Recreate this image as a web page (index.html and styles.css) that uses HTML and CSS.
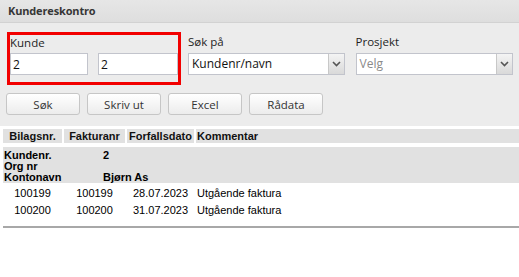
FILE: index.html
```html
<!DOCTYPE html>
<html lang="no">
<head>
<meta charset="utf-8">
<title>Kundereskontro</title>
<link rel="stylesheet" href="styles.css">
</head>
<body>
<div class="titlebar">Kundereskontro</div>
<div class="panel">
  <div class="filters">
    <div class="kunde-box">
      <div class="lbl">Kunde</div>
      <div class="pair">
        <input class="txt from" type="text" value="2">
        <input class="txt to" type="text" value="2">
      </div>
    </div>
    <div class="field sok">
      <div class="lbl">Søk på</div>
      <div class="select">
        <span class="val">Kundenr/navn</span>
        <span class="arrow"><svg width="9" height="6" viewBox="0 0 9 6"><path d="M1 1 L4.5 4.5 L8 1" fill="none" stroke="#555" stroke-width="1.6"/></svg></span>
      </div>
    </div>
    <div class="field prosjekt">
      <div class="lbl">Prosjekt</div>
      <div class="select">
        <span class="val placeholder">Velg</span>
        <span class="arrow"><svg width="9" height="6" viewBox="0 0 9 6"><path d="M1 1 L4.5 4.5 L8 1" fill="none" stroke="#555" stroke-width="1.6"/></svg></span>
      </div>
    </div>
  </div>
  <div class="buttons">
    <button class="btn">Søk</button>
    <button class="btn">Skriv ut</button>
    <button class="btn">Excel</button>
    <button class="btn">Rådata</button>
  </div>
</div>
<div class="report">
  <div class="cols thead">
    <div class="c">Bilagsnr.</div>
    <div class="c">Fakturanr</div>
    <div class="c">Forfallsdato</div>
    <div class="c left">Kommentar</div>
  </div>
  <div class="group">
    <div class="grow"><span class="gl">Kundenr.</span><span>2</span></div>
    <div class="grow"><span class="gl">Org nr</span><span></span></div>
    <div class="grow"><span class="gl">Kontonavn</span><span>Bjørn As</span></div>
  </div>
  <div class="rows">
    <div class="cols drow">
      <div class="c">100199</div>
      <div class="c">100199</div>
      <div class="c">28.07.2023</div>
      <div class="c left">Utgående faktura</div>
    </div>
    <div class="cols drow">
      <div class="c">100200</div>
      <div class="c">100200</div>
      <div class="c">31.07.2023</div>
      <div class="c left">Utgående faktura</div>
    </div>
  </div>
  <div class="rule"></div>
</div>
</body>
</html>
```
FILE: styles.css
```css
* { box-sizing: border-box; }
html, body { margin: 0; padding: 0; background: #fff; }
body { font-family: "Open Sans", "Noto Sans", sans-serif; color: #222; }

.titlebar {
  height: 23px;
  line-height: 22px;
  padding-left: 8px;
  font-size: 11px;
  font-weight: 700;
  color: #363636;
  background: linear-gradient(#e6e6e6, #dedede);
  border-bottom: 1px solid #d2d2d2;
  letter-spacing: -0.15px;
}

.panel {
  background: #ececec;
  padding: 9px 6px 11px 6px;
}

.filters { display: flex; align-items: flex-start; }

.kunde-box {
  margin-left: 1px;
  width: 174px;
  border: 3px solid #f20000;
  padding: 0 0 7px 0;
}
.lbl {
  height: 18px;
  line-height: 16px;
  font-size: 11.5px;
  color: #1e1e1e;
}
.field .lbl { height: 19px; }
.pair { display: flex; gap: 10px; }
.txt {
  height: 22px;
  margin: 0;
  border: 1px solid #c2c4cc;
  background: #fff;
  font-family: "Open Sans", "Noto Sans", sans-serif;
  font-size: 12px;
  color: #111;
  padding: 0 2px;
  outline: none;
}
.txt.from { width: 78px; }
.txt.to { width: 80px; }

.field { margin-top: 2px; }
.field.sok { margin-left: 7px; width: 159px; }
.field.prosjekt { margin-left: 11px; width: 160px; }

.select {
  height: 22px;
  display: flex;
  border: 1px solid #c2c4cc;
  background: #fff;
}
.select .val {
  flex: 1;
  line-height: 20px;
  padding-left: 3px;
  font-size: 12px;
  color: #111;
}
.select .val.placeholder { color: #8a8a8a; }
.select .arrow {
  width: 16px;
  display: flex;
  align-items: center;
  justify-content: center;
  border-left: 1px solid #c8c8c8;
  background: linear-gradient(#f4f4f4, #d9d9d9);
}

.buttons { display: flex; gap: 7px; margin-top: 8px; }
.btn {
  width: 74px;
  height: 22px;
  margin: 0;
  padding: 0;
  border: 1px solid #c6c6c6;
  border-radius: 3px;
  background: linear-gradient(#ffffff, #ececec);
  font-family: "Open Sans", "Noto Sans", sans-serif;
  font-size: 11.5px;
  color: #333;
}

.report {
  padding: 3px 0 0 3px;
  font-family: "Liberation Sans", Arial, sans-serif;
  color: #000;
}
.cols {
  display: grid;
  grid-template-columns: 59px 61px 67px 1fr;
  column-gap: 2px;
}
.thead { height: 14px; }
.thead .c {
  background: #e1e1e1;
  font-size: 11px;
  font-weight: 700;
  line-height: 14px;
  color: #111;
}
.c { text-align: center; white-space: nowrap; }
.c.left { text-align: left; padding-left: 1px; }

.group {
  margin-top: 4px;
  background: #e1e1e1;
  padding: 3px 1px 0 1px;
  height: 36px;
  font-size: 11px;
  font-weight: 700;
}
.grow { display: flex; line-height: 11px; }
.gl { width: 99px; }

.rows { margin-top: 2px; font-size: 11px; }
.drow { line-height: 17px; }

.rule { margin-top: 7px; border-top: 2px solid #a8a8a8; }
```
